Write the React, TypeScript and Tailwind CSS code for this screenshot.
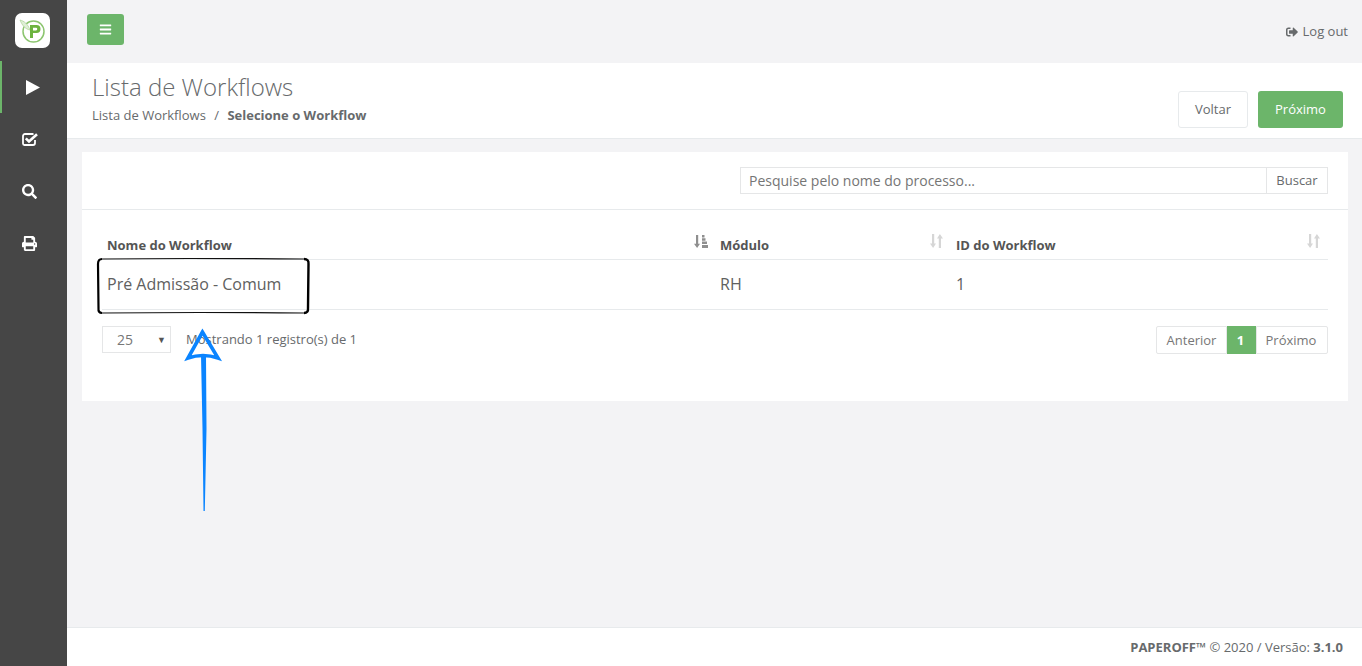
import { FaBars, FaSearch, FaPrint, FaSignOutAlt } from "react-icons/fa";

const Logo = () => (
    <svg viewBox="0 0 35 35" className="w-[35px] h-[35px]">
        <rect width="35" height="35" rx="7" fill="#fff" />
        <circle cx="18.500" cy="18.500" r="10.500" fill="none" stroke="#8cc56f" strokeWidth="1.500" />
        <path d="M5 7 C9 8 13 11 15 17 C10 16 7 12 5 7Z" fill="#dfeed6" stroke="#a9d494" strokeWidth="0.700" />
        <path d="M15 12h6.500a4 4 0 0 1 0 8H18v5h-3z M18 14.800v2.600h3a1.300 1.300 0 0 0 0-2.600z" fill="#6cb33f" fillRule="evenodd" />
    </svg>
);

const SortIcon = () => (
    <svg width="13" height="14" viewBox="0 0 13 14" fill="#d6d6d6" className="block">
        <path d="M2 0h2.200v9.500H6L3.100 14 0 9.500h2z" />
        <path d="M8.800 14h2.200V4.500H13L9.900 0 7 4.500h1.800z" />
    </svg>
);

const SortActiveIcon = () => (
    <svg width="14" height="13" viewBox="0 0 14 13" fill="#8f8f8f" className="block">
        <path d="M2 0h2.200v8.800H6L3.100 13 0 8.800h2z" />
        <path d="M8 0h2.500v2.500H8zM8 3.300h3.500v2.500H8zM8 6.600h5v2.500H8zM8 9.900h6V13H8z" />
    </svg>
);

const CheckIcon = () => (
    <svg width="16" height="13" viewBox="0 0 16 13" fill="none" className="block">
        <path d="M11.500 1H3a2 2 0 0 0-2 2v7.500a1.500 1.500 0 0 0 1.500 1.500H11a2 2 0 0 0 2-2V7" stroke="#fff" strokeWidth="1.800" />
        <path d="M3.800 5.300 7 8.500 15 1.200" stroke="#fff" strokeWidth="2.600" />
    </svg>
);

const PlayIcon = () => (
    <svg width="14" height="15" viewBox="0 0 14 15" fill="#fff" className="block">
        <path d="M0 0 14 7.500 0 15z" />
    </svg>
);

const App = () => {
    return (
        <div className="flex w-[1362px] h-[666px] overflow-hidden bg-[#f3f3f5] text-[#676a6c] text-[13px] font-['Open_Sans',sans-serif]">
            <aside className="w-[67px] shrink-0 bg-[#464646] flex flex-col">
                <div className="h-[61px] flex justify-center pt-[13px] pr-[2px]"><Logo /></div>
                <div className="h-[52px] flex items-center pl-[24px] border-l-2 border-[#6cb56a]"><PlayIcon /></div>
                <div className="h-[52px] flex items-center pl-[22px]"><CheckIcon /></div>
                <div className="h-[52px] flex items-center pl-[22px] text-white text-[15px]"><FaSearch /></div>
                <div className="h-[52px] flex items-center pl-[22px] text-white text-[15px]"><FaPrint /></div>
            </aside>

            <div className="flex-1 flex flex-col min-w-0">
                <header className="h-[63px] shrink-0 flex items-center justify-between pl-5 pr-[14px]">
                    <button className="w-[37px] h-[31px] -mt-[4px] rounded-[3px] bg-[#6cb56a] text-white flex items-center justify-center text-[13px]"><FaBars /></button>
                    <a className="flex items-center gap-[5px] text-[#676a6c]"><FaSignOutAlt className="text-[12px]" /> Log out</a>
                </header>

                <section className="h-[76px] shrink-0 bg-white border-b border-[#e7eaec] flex justify-between pl-[25px] pr-[19px]">
                    <div className="pt-[9px]">
                        <h2 className="text-[24px] leading-[30px] font-light text-[#676a6c]">Lista de Workflows</h2>
                        <p className="mt-[4px] leading-[18px]">Lista de Workflows <span className="mx-[5px]">/</span> <strong className="font-bold">Selecione o Workflow</strong></p>
                    </div>
                    <div className="flex gap-[10px] pt-[28px]">
                        <button className="w-[70px] h-[37px] rounded-[3px] border border-[#e7eaec] bg-white text-[#676a6c]">Voltar</button>
                        <button className="w-[85px] h-[37px] rounded-[3px] bg-[#6cb56a] text-white">Próximo</button>
                    </div>
                </section>

                <main className="flex-1 pt-[13px] pl-[15px] pr-[14px]">
                    <div className="relative h-[249px] bg-white">
                        <div className="h-[58px] border-b border-[#e7eaec] flex justify-end pt-[15px] pr-5">
                            <input readOnly placeholder="Pesquise pelo nome do processo..." className="w-[527px] h-[27px] border border-[#e5e6e7] px-2 text-[14px] placeholder:text-[#757575] outline-none" />
                            <button className="w-[62px] h-[27px] -ml-px border border-[#e5e6e7] text-[13px]">Buscar</button>
                        </div>

                        <div className="mx-5 mt-[13px]">
                            <div className="grid grid-cols-[613px_236px_1fr] h-[37px] border-b border-[#e7eaec] font-bold text-[#555]">
                                <div className="relative pl-[5px] pt-[13px]">Nome do Workflow<span className="absolute right-[7px] top-[12px]"><SortActiveIcon /></span></div>
                                <div className="relative pl-[5px] pt-[13px]">Módulo<span className="absolute right-[8px] top-[11px]"><SortIcon /></span></div>
                                <div className="relative pl-[5px] pt-[13px]">ID do Workflow<span className="absolute right-[8px] top-[11px]"><SortIcon /></span></div>
                            </div>
                            <div className="grid grid-cols-[613px_236px_1fr] h-[50px] items-center pb-[2px] border-b border-[#e7eaec] text-[16px] text-[#606060]">
                                <div className="pl-[5px]">Pré Admissão - Comum</div>
                                <div className="pl-[5px]">RH</div>
                                <div className="pl-[5px]">1</div>
                            </div>
                            <div className="flex justify-between pt-[16px]">
                                <div className="flex items-start">
                                    <div className="relative w-[69px] h-[27px] border border-[#e5e6e7] text-[14px] pl-[14px] leading-[26px] text-[#777]">25<span className="absolute right-[4px] top-0 text-[9px] text-[#555]">▼</span></div>
                                    <p className="ml-[15px] mt-[4px]">Mostrando 1 registro(s) de 1</p>
                                </div>
                                <div className="flex h-[28px] leading-[26px]">
                                    <span className="w-[71px] border border-[#e5e6e7] rounded-l-[2px] text-center text-[#777]">Anterior</span>
                                    <span className="w-[29px] pr-[2px] bg-[#6cb56a] text-white text-center font-bold leading-[28px]">1</span>
                                    <span className="w-[72px] pr-[2px] border border-[#e5e6e7] rounded-r-[2px] text-center text-[#777]">Próximo</span>
                                </div>
                            </div>
                        </div>

                        {/* marcacao desenhada por cima do print */}
                        <svg className="absolute left-[14px] top-[106px] overflow-visible" width="215" height="56" viewBox="0 0 215 56" fill="none">
                            <path d="M6 1 Q80 0 208 1 M6 55 Q100 54 208 55" stroke="#111" strokeWidth="1.200" />
                            <path d="M6 1 Q2 1 2 6 L2.500 50 Q2 55 6 55" stroke="#000" strokeWidth="2.200" />
                            <path d="M208 1 Q213 1 212.500 6 L212 50 Q212.500 55 208 55" stroke="#000" strokeWidth="2.400" />
                        </svg>
                        <svg className="absolute left-[98px] top-[177px] overflow-visible" width="48" height="190" viewBox="0 0 48 190" fill="none">
                            <path d="M22.500 3 L8 29 Q23 24 38 29 Z" stroke="#0a84ff" strokeWidth="3.600" strokeLinejoin="miter" />
                            <path d="M21 26 L26 26 L26.500 100 L24.800 182 L23.500 182 L22.500 100 Z" fill="#0a84ff" />
                        </svg>
                    </div>
                </main>

                <footer className="h-[39px] shrink-0 pt-[2px] bg-white border-t border-[#e7eaec] flex items-center justify-end pr-[19px]">
                    <p><strong>PAPEROFF™</strong> © 2020 / Versão: <strong>3.1.0</strong></p>
                </footer>
            </div>
        </div>
    );
};

export default App;
